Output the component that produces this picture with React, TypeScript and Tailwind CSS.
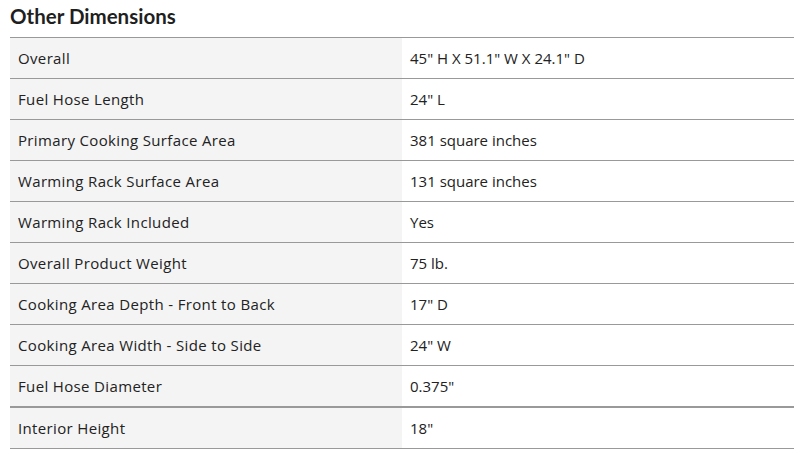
const rows: [string, string][] = [
  ['Overall', '45" H X 51.1" W X 24.1" D'],
  ['Fuel Hose Length', '24" L'],
  ['Primary Cooking Surface Area', '381 square inches'],
  ['Warming Rack Surface Area', '131 square inches'],
  ['Warming Rack Included', 'Yes'],
  ['Overall Product Weight', '75 lb.'],
  ['Cooking Area Depth - Front to Back', '17" D'],
  ['Cooking Area Width - Side to Side', '24" W'],
  ['Fuel Hose Diameter', '0.375"'],
  ['Interior Height', '18"'],
];

export default function App() {
  return (
    <div className="w-[802px] h-[454px] bg-white px-[10px] pt-[4px] font-['Open_Sans','Liberation_Sans',sans-serif] text-[#222]">
      <h2 className="font-['Lato',sans-serif] text-[20.5px] font-bold leading-[24px] mb-[9px] text-[#1f1f1f]">
        Other Dimensions
      </h2>
      <div className="w-[784px] border-t border-[#999]">
        {rows.map(([k, v], i) => (
          <div
            key={k}
            className={
              i === rows.length - 2
                ? 'flex h-[42px] border-b-2 border-[#999] text-[15px] leading-[20px]'
                : 'flex h-[41px] border-b border-[#999] text-[15px] leading-[20px]'
            }
          >
            <div className="w-[392px] bg-[#f4f4f4] pl-[8px] flex items-center tracking-[0.35px]">{k}</div>
            <div className="flex-1 pl-[8px] flex items-center">{v}</div>
          </div>
        ))}
      </div>
    </div>
  );
}
